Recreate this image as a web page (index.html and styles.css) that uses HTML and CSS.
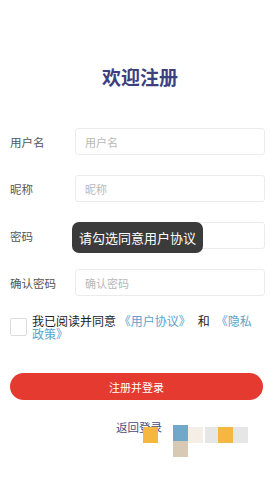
FILE: index.html
```html
<!DOCTYPE html>
<html lang="zh-CN">
<head>
    <meta charset="UTF-8">
    <meta name="viewport" content="width=device-width, initial-scale=1.0">
    <title>欢迎注册</title>
    <link rel="stylesheet" href="styles.css">
</head>
<body>
    <div class="page">
        <h1 class="title">欢迎注册</h1>
        <div class="form">
            <div class="row">
                <label class="label">用户名</label>
                <input type="text" class="input" placeholder="用户名">
            </div>
            <div class="row">
                <label class="label">昵称</label>
                <input type="text" class="input" placeholder="昵称">
            </div>
            <div class="row">
                <label class="label">密码</label>
                <input type="password" class="input" placeholder="">
            </div>
            <div class="row">
                <label class="label">确认密码</label>
                <input type="password" class="input" placeholder="确认密码">
            </div>
        </div>
        <div class="agree">
            <span class="check"></span>
            <div class="agree-text">
                <div class="line">我已阅读并同意 <a class="link">《用户协议》</a><span class="and">和</span><a class="link">《隐私</a></div>
                <div class="line"><a class="link">政策》</a></div>
            </div>
        </div>
        <button class="submit">注册并登录</button>
        <div class="back">返回登录</div>
    </div>

    <div class="toast">请勾选同意用户协议</div>

    <div class="mosaic">
        <span class="tile orange" style="left:0;top:2px"></span>
        <span class="tile blue" style="left:30px;top:0"></span>
        <span class="tile tan" style="left:30px;top:16px"></span>
        <span class="tile beige" style="left:45px;top:2px"></span>
        <span class="tile grey" style="left:62px;top:2px"></span>
        <span class="tile orange" style="left:75px;top:2px"></span>
        <span class="tile grey" style="left:90px;top:2px"></span>
    </div>
</body>
</html>
```

FILE: styles.css
```css
* {
    box-sizing: border-box;
}
body {
    margin: 0;
    background: #ffffff;
    font-family: "Noto Sans CJK SC", "Noto Sans", sans-serif;
    color: #333;
    width: 270px;
    height: 480px;
    overflow: hidden;
    position: relative;
}
.page {
    padding: 67px 5px 0 10px;
    display: flex;
    flex-direction: column;
}
.title {
    margin: 0;
    text-align: center;
    font-size: 19px;
    line-height: 19px;
    font-weight: bold;
    color: #3d3f7e;
    padding-left: 5px;
}
.form {
    margin-top: 42px;
    display: flex;
    flex-direction: column;
    gap: 20px;
}
.row {
    display: flex;
    align-items: center;
    height: 27px;
}
.label {
    width: 65px;
    font-size: 11.5px;
    color: #555;
}
.input {
    flex: 1;
    height: 27px;
    border: 1px solid #ececec;
    border-radius: 3px;
    padding: 0 9px;
    font-family: inherit;
    font-size: 11px;
    color: #333;
    outline: none;
}
.input::placeholder {
    color: #b8b8b8;
}
.agree {
    margin-top: 18px;
    display: flex;
    align-items: flex-start;
    gap: 5px;
}
.check {
    flex: none;
    width: 17px;
    height: 18px;
    margin-top: 4px;
    border: 1px solid #dcdcdc;
    border-radius: 2px;
}
.agree-text {
    font-size: 12px;
    line-height: 13px;
    color: #222;
    white-space: nowrap;
}
.link {
    color: #5ba3cc;
}
.and {
    margin: 0 6px 0 7px;
}
.submit {
    margin-top: 33px;
    height: 27px;
    width: 253px;
    border: none;
    border-radius: 14px;
    background: #e53a30;
    color: #fff;
    font-family: inherit;
    font-size: 11px;
}
.back {
    margin-top: 20px;
    text-align: center;
    font-size: 11.5px;
    line-height: 14px;
    color: #4b4c7c;
    padding-left: 3px;
}
.toast {
    position: absolute;
    left: 72px;
    top: 222px;
    width: 131px;
    height: 31px;
    border-radius: 7px;
    background: #3b3b3b;
    color: #fff;
    font-size: 13px;
    display: flex;
    align-items: center;
    justify-content: center;
}
.mosaic {
    position: absolute;
    left: 143px;
    top: 425px;
}
.tile {
    position: absolute;
    width: 15px;
    height: 16px;
}
.orange {
    background: #f5b740;
}
.blue {
    background: #6fa8c9;
}
.tan {
    background: #d8c9b4;
}
.beige {
    background: #f4eee6;
}
.grey {
    background: #e6e6e6;
}
```
